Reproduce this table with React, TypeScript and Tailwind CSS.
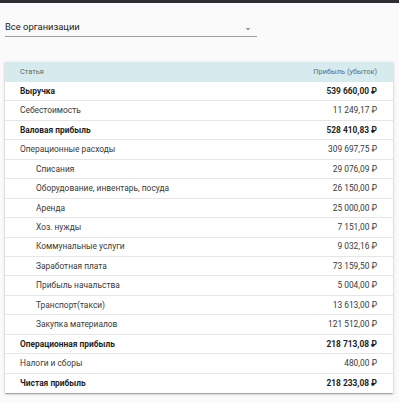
const rows: { name: string; value: string; bold?: boolean; indent?: boolean }[] = [
  { name: 'Выручка', value: '539 660,00 ₽', bold: true },
  { name: 'Себестоимость', value: '11 249,17 ₽' },
  { name: 'Валовая прибыль', value: '528 410,83 ₽', bold: true },
  { name: 'Операционные расходы', value: '309 697,75 ₽' },
  { name: 'Списания', value: '29 076,09 ₽', indent: true },
  { name: 'Оборудование, инвентарь, посуда', value: '26 150,00 ₽', indent: true },
  { name: 'Аренда', value: '25 000,00 ₽', indent: true },
  { name: 'Хоз. нужды', value: '7 151,00 ₽', indent: true },
  { name: 'Коммунальные услуги', value: '9 032,16 ₽', indent: true },
  { name: 'Заработная плата', value: '73 159,50 ₽', indent: true },
  { name: 'Прибыль начальства', value: '5 004,00 ₽', indent: true },
  { name: 'Транспорт(такси)', value: '13 613,00 ₽', indent: true },
  { name: 'Закупка материалов', value: '121 512,00 ₽', indent: true },
  { name: 'Операционная прибыль', value: '218 713,08 ₽', bold: true },
  { name: 'Налоги и сборы', value: '480,00 ₽' },
  { name: 'Чистая прибыль', value: '218 233,08 ₽', bold: true },
];

export default function App() {
  return (
    <div className="w-[399px] h-[402px] bg-[#fafafa] font-['Roboto',sans-serif] overflow-hidden">
      <div className="h-[3px] bg-[#2e2e32]" />

      {/* фильтр организаций */}
      <div className="ml-[5px] mt-[17px] w-[252px] border-b border-[#9e9e9e] h-[17px] flex items-start justify-between">
        <span className="text-[9.4px] leading-[14px] text-[#212121]">Все организации</span>
        <svg width="10" height="10" viewBox="0 0 24 24" className="mr-[4px] mt-[4px]">
          <path d="M7 10l5 5 5-5z" fill="#757575" />
        </svg>
      </div>

      <div className="mx-[5px] mt-[25px] w-[388px] bg-white shadow-[0_1px_3px_rgba(0,0,0,0.2),0_1px_1px_rgba(0,0,0,0.14),0_2px_1px_-1px_rgba(0,0,0,0.12)]">
        <div className="h-[20px] bg-[#d6ebee] flex items-center justify-between pl-[15px] pr-[16px] text-[7.4px] text-[#5f6b6d]">
          <span>Статья</span>
          <span>Прибыль (убыток)</span>
        </div>
        {rows.map((r) => (
          <div
            key={r.name}
            className={
              'h-[19.45px] flex items-center justify-between pr-[16px] border-b border-[#e6e6e6] last:border-b-0 text-[8.4px] ' +
              (r.indent ? 'pl-[31px] ' : 'pl-[15px] ') +
              (r.bold ? 'font-bold text-[#1f1f1f]' : 'text-[#3a3a3a]')
            }
          >
            <span>{r.name}</span>
            <span>{r.value}</span>
          </div>
        ))}
      </div>
    </div>
  );
}
